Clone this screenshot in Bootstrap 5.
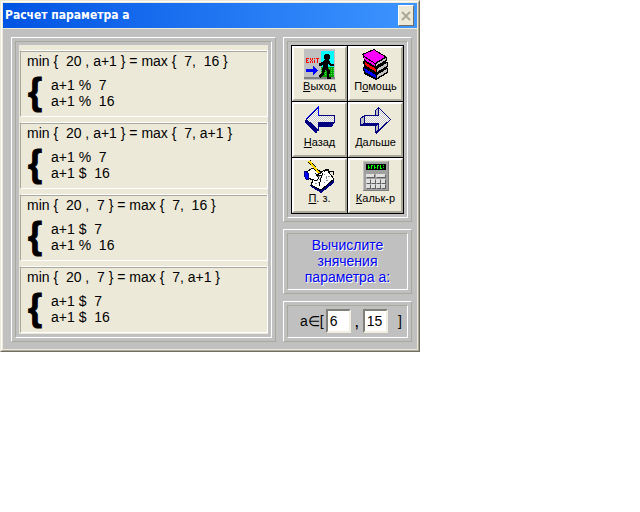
<!DOCTYPE html>
<html lang="ru">
<head>
<meta charset="utf-8">
<meta name="viewport" content="width=device-width, initial-scale=1">
<title>Расчет параметра а</title>
<link href="https://cdn.jsdelivr.net/npm/bootstrap@5.3.0/dist/css/bootstrap.min.css" rel="stylesheet">
<style>
body{background:#fff;font-family:"Liberation Sans",Arial,sans-serif;font-size:14px;line-height:16px;color:#000}
.win{max-width:420px;background:#c0c0c0;border:1px solid;border-color:#ece9d8 #716f64 #716f64 #ece9d8}
.win-in{border:1px solid;border-color:#fff #aca899 #aca899 #fff}
.win-fr{border:1px solid #ece9d8}
.titlebar{height:26px;padding:0 3px 0 2px;background:linear-gradient(90deg,#0054e3,#3d95ff);border-bottom:1px solid #ece9d8}
.titlebar h1{font:bold 12px/25px "DejaVu Sans Condensed","DejaVu Sans",sans-serif;color:#fff;margin:0}
.closer{width:16px;height:21px;background:#ece9d8;border:1px solid;border-color:#fff #716f64 #716f64 #fff;padding:0}
.workspace{padding:8px 5px 7px 8px;gap:7px}
.groove{border:1px solid;border-color:#fff #a8a89c #a8a89c #fff;padding:3px}
.groove-in{border:1px solid;border-color:#a8a89c #fff #fff #a8a89c;padding:3px}
.side{width:129px;flex:none;gap:7px}
.cases{background:#ece9d8;padding:5px 0 1px 1px;display:grid;gap:5px}
.cell{border:1px solid;border-color:#fff #fff #fff #a8a89c;box-shadow:inset 0 1px #a8a89c;padding:2px 6px 7px}
.cell p,.cell li{white-space:pre;margin:0}
.system{padding-top:8px}
.brace{font-size:36px;font-weight:bold;line-height:30px;width:24px;height:32px;padding-left:1px;-webkit-text-stroke:1px #000}
.keys{display:grid;grid-template-columns:1fr 1fr;background:#000;padding:1px;gap:1px}
.key{height:55px;font-size:11px;line-height:13px;color:#000;background:#ece9d8;border:2px solid;border-color:#fff #aca899 #aca899 #fff;padding:1px 0 0;white-space:nowrap;display:flex;flex-direction:column;align-items:center;justify-content:flex-start}
.key svg{display:block;flex:none;overflow:visible}
.hint{color:#0000f0;text-shadow:1px 1px #fff;margin:0;padding:0 0 1px}
.answer{padding:0 2px 1px 9px;gap:2px}
.comma{width:8px;font-size:18px;text-align:center}
.num{width:25px;height:24px;font-size:14px;padding:0 2px;color:#000;background:#fff;border:2px solid;border-color:#808078 #f1efe2 #f1efe2 #808078;border-radius:0}
</style>
<script src="https://cdn.jsdelivr.net/npm/bootstrap@5.3.0/dist/js/bootstrap.bundle.min.js"></script>
</head>
<body>
<main class="win"><div class="win-in"><div class="win-fr">
<header class="titlebar d-flex align-items-center justify-content-between">
<h1>Расчет параметра а</h1>
<button type="button" class="closer" aria-label="Закрыть"><svg class="d-block mx-auto" width="10" height="10" viewBox="0 0 10 10"><path d="M1 1L9 9M9 1L1 9" stroke="#aca899" stroke-width="2"/></svg></button>
</header>
<div class="workspace d-flex">
<section class="groove flex-grow-1"><div class="groove-in"><div class="cases">
<div class="cell"><p>min {  20 , a+1 } = max {  7,  16 }</p><div class="system d-flex"><span class="brace">{</span><ul class="list-unstyled m-0"><li>a+1 %  7</li><li>a+1 %  16</li></ul></div></div>
<div class="cell"><p>min {  20 , a+1 } = max {  7, a+1 }</p><div class="system d-flex"><span class="brace">{</span><ul class="list-unstyled m-0"><li>a+1 %  7</li><li>a+1 $  16</li></ul></div></div>
<div class="cell"><p>min {  20 ,  7 } = max {  7,  16 }</p><div class="system d-flex"><span class="brace">{</span><ul class="list-unstyled m-0"><li>a+1 $  7</li><li>a+1 %  16</li></ul></div></div>
<div class="cell"><p>min {  20 ,  7 } = max {  7, a+1 }</p><div class="system d-flex"><span class="brace">{</span><ul class="list-unstyled m-0"><li>a+1 $  7</li><li>a+1 $  16</li></ul></div></div>
</div></div></section>
<aside class="side d-flex flex-column">
<div class="groove"><div class="groove-in"><div class="keys">
<button type="button" class="key">
<svg width="31" height="31" viewBox="0 0 31 31" shape-rendering="crispEdges"><path fill="#c0c0c0" d="M0 0h31v31H0z"/><path fill="#0ff" d="M17 2h13v16H17z"/><path fill="#00a000" d="M17 18h13v10H17z"/><path d="M17 19.500h13M17 21.500h13M17 23.500h13M17 25.500h13" stroke="#40e040" stroke-dasharray="1 1"/><path fill="#808080" d="M0 28h31v2H0z"/>
<path d="M2 9.500h3M2 11.500h2M2 13.500h3M2.500 9v5M6.500 9v2M8.500 9v2M7.500 11v1M6.500 12v2M8.500 12v2M10.500 9v1M10.500 11v3M12 9.500h3M13.500 9v5" stroke="#f00" stroke-width="1"/>
<path fill="#00f" d="M2 20h7v-3l5 4-5 5v-3H2z"/><circle cx="23" cy="8" r="3"/><path d="M20 11h5l1 2 1 2h3v2h-4l-2-2v4l2 3-1 6h2v2h-4v-8l-2-1-1 4-4 4-1-2 3-4 1-8-2 2h-2v-3l3-1z"/></svg>
<span><u>В</u>ыход</span></button>
<button type="button" class="key">
<svg width="31" height="31" viewBox="0 0 31 31" shape-rendering="crispEdges"><path d="M3 18l3-2 22 3v5L16 31 4 25z"/><path fill="#00f" d="M4 19l12 7v3L5 23z"/><path fill="#c0c0c0" d="M17 26l10-6v3l-10 6z"/><path d="M3 12l3-2 22 3v5L16 25 4 18z"/><path fill="#f00" d="M5 13l11 7v3L5 16z"/><path fill="#c0c0c0" d="M17 20l10-6v3l-10 6z"/><path d="M2 5L14 0l13 8v4l-11 7L5 12z"/><path fill="#f0f" d="M3 6l11-5 11 7-10 6z"/><path fill="#f0f" d="M4 8l11 7v2L5 11z"/><path fill="#c0c0c0" d="M16 15l10-6v2l-10 6z"/></svg>
<span>П<u>о</u>мощь</span></button>
<button type="button" class="key">
<svg width="31" height="31" viewBox="0 0 31 31" shape-rendering="crispEdges"><defs><pattern id="dots" width="2" height="2" patternUnits="userSpaceOnUse"><path fill="#fff" d="M0 0h2v2H0z"/><path fill="#c8c8c8" d="M0 0h1v1H0zM1 1h1v1H1z"/></pattern></defs><path fill="#000080" d="M1 15l2-1 12 7h-1l1 3-3 5L1 18zM14 17h17l-3 5H14z"/><path fill="url(#dots)" stroke="#000080" d="M2.500 14.500l12-12v8h16v7h-16v8z"/><path d="M2 14L14 2v9" fill="none" stroke="#00f"/></svg>
<span><u>Н</u>азад</span></button>
<button type="button" class="key">
<svg width="31" height="31" viewBox="0 0 31 31" shape-rendering="crispEdges"><path fill="#000080" d="M0 21l4-3h15v6l12-10-15 15v-8z"/><path fill="#c0c0c0" stroke="#000080" d="M.5 13.500l4-3v8l-4 2zM15.500 5.500l3-3v8h-3zM15.500 21.500l3-3v6l-3 3z"/><path fill="url(#dots)" stroke="#000080" d="M4.500 10.500h14v-8l12 12-12 11v-7h-14z"/></svg>
<span><u>Д</u>альше</span></button>
<button type="button" class="key">
<svg width="31" height="31" viewBox="0 0 31 31" shape-rendering="crispEdges"><path fill="#000080" d="M6 25l11 7 13-10v-3L17 29 7 23z"/><path fill="#fff" stroke="#000" d="M7 24l5-12 11-3 7 9-13 11z"/><path d="M14 16l5-2M13 18l6-2M12 20l6-2M11 23l6-2M20 13l4 5M22 18l4-3M20 22l5-4" stroke="#909090" stroke-dasharray="2 1"/><path d="M18 13l-3 12M20 11l2-3h2v3l2-1h3v4" fill="none" stroke="#000"/><path fill="#fff" stroke="#000" d="M3 11l5-4h4l7 6-2 2-5-2 3 4-2 2h-3l-7-2z"/><path fill="#00f" stroke="#000080" d="M1 10l3 2v6H2l-2-4z"/><path d="M5 0l11 13" stroke="#000" stroke-width="3"/><path d="M5 0l10 12" stroke="#ffd800" stroke-width="2"/></svg>
<span><u>П</u>. з.</span></button>
<button type="button" class="key">
<svg width="31" height="31" viewBox="0 0 31 31" shape-rendering="crispEdges"><path fill="#808080" d="M3 0h26v30H3z"/><path fill="#c0c0c0" d="M3 0h25v29H3z"/><path fill="#a0a0a0" d="M4 1h24v28H4z"/><path d="M6 3h20v6H6z"/><path d="M8.500 4v4M9 6.500h1M11.500 4v4M12 4.500h1M14.500 4v4M15 6.500h1M17.500 4v4M18 4.500h1M20.500 4v4M21 7.500h1M23.500 4v1M23.500 6v1" stroke="#0f0"/><path fill="#606060" d="M7 14h8v3H7zM17 14h9v3h-9zM7 19h4v4H7zM12 19h4v4h-4zM17 19h4v4h-4zM22 19h4v4h-4zM7 24h4v4H7zM12 24h4v4h-4zM17 24h4v4h-4zM22 24h4v4h-4z"/><path fill="#e0e0e0" d="M6 13h8v3H6zM16 13h9v3h-9zM6 18h4v4H6zM11 18h4v4h-4zM16 18h4v4h-4zM21 18h4v4h-4zM6 23h4v4H6zM11 23h4v4h-4zM16 23h4v4h-4zM21 23h4v4h-4z"/></svg>
<span><u>К</u>альк-р</span></button>
</div></div></div>
<div class="groove"><div class="groove-in"><p class="hint text-center">Вычислите<br>знячения<br>параметра а:</p></div></div>
<div class="groove"><div class="groove-in"><form class="answer d-flex align-items-center">
<label for="from">a∈[</label><input class="num" id="from" type="text" value="6"><label class="comma" for="to">,</label><input class="num" id="to" type="text" value="15"><span class="ms-auto">]</span>
</form></div></div>
</aside>
</div></div></div></main>
</body></html>
